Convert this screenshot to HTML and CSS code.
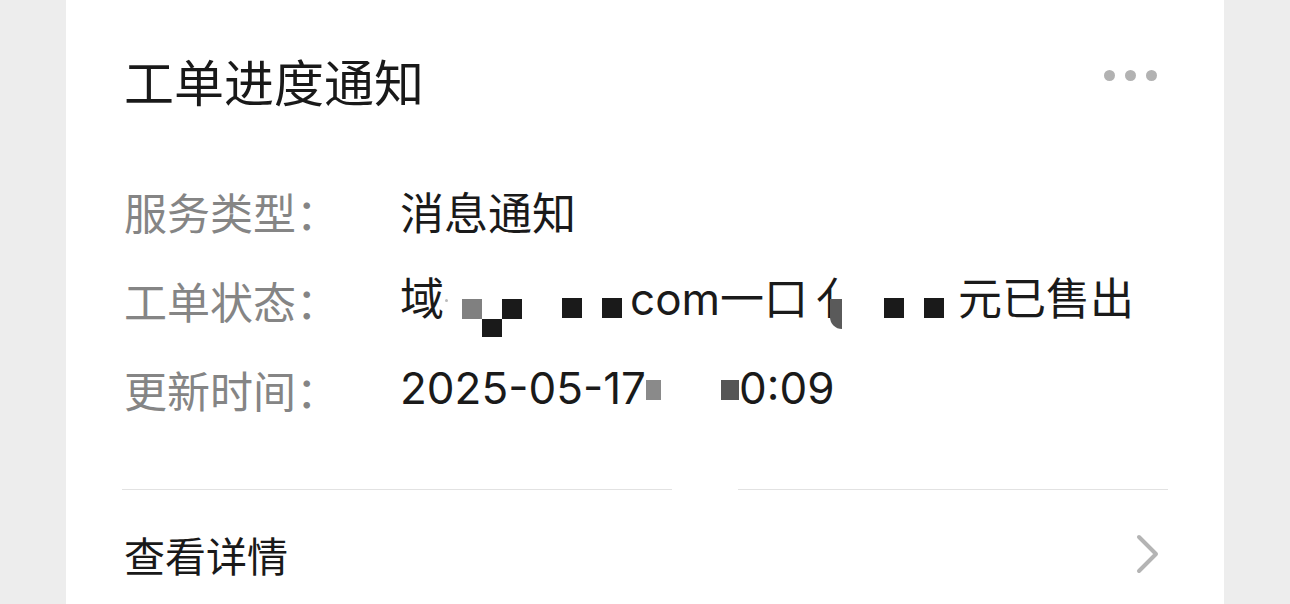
FILE: index.html
```html
<!DOCTYPE html>
<html lang="zh-CN">
<head>
<meta charset="utf-8">
<title>工单进度通知</title>
<link rel="stylesheet" href="styles.css">
</head>
<body>
<div class="card">
  <div class="header">
    <h1 class="title">工单进度通知</h1>
    <div class="more"><span class="dot"></span><span class="dot"></span><span class="dot"></span></div>
  </div>
  <div class="rows">
    <div class="row">
      <div class="label">服务类型：</div>
      <div class="value">消息通知</div>
    </div>
    <div class="row">
      <div class="label">工单状态：</div>
      <div class="value">
        <span class="txt">域</span><span class="mid-dot"></span>
        <span class="mosaic m1"><i class="g"></i><i></i><i class="b"></i><i></i><i class="b"></i><i></i></span>
        <span class="sq b s2"></span><span class="sq b s3"></span>
        <span class="txt com">com一口</span><span class="txt part">亻</span><span class="wedge"></span>
        <span class="sq b s4"></span><span class="sq b s5"></span>
        <span class="txt tail">元已售出</span>
      </div>
    </div>
    <div class="row">
      <div class="label">更新时间：</div>
      <div class="value">
        <span class="txt">2025-05-17</span><span class="sq g t1"></span><span class="sq dg t2"></span><span class="txt">0:09</span>
      </div>
    </div>
  </div>
  <div class="divider"></div>
  <div class="footer">
    <span class="link">查看详情</span>
    <svg class="chev" width="24" height="40" viewBox="0 0 24 40"><polyline points="3,3 20,20 3,37" fill="none" stroke="#b4b4b4" stroke-width="4" stroke-linecap="round" stroke-linejoin="round"/></svg>
  </div>
</div>
</body>
</html>
```

FILE: styles.css
```css
html, body {
  margin: 0;
  padding: 0;
  height: 604px;
  overflow: hidden;
  background: #ededed;
}
body {
  font-family: Inter, "Noto Sans CJK SC", sans-serif;
  color: #1a1a1a;
}
.card {
  margin-left: 66px;
  width: 1158px;
  height: 604px;
  background: #fff;
  padding: 50px 56px 0 58px;
  box-sizing: border-box;
  overflow: hidden;
}
.header {
  display: flex;
  align-items: center;
  justify-content: space-between;
  height: 60px;
}
.title {
  margin: 0;
  font-family: "Noto Sans CJK SC", sans-serif;
  font-weight: 400;
  font-size: 50px;
  line-height: 60px;
  color: #191919;
}
.more {
  display: flex;
  gap: 10px;
  margin-right: 11px;
  margin-top: -10px;
}
.dot {
  width: 11px;
  height: 11px;
  border-radius: 50%;
  background: #b2b2b2;
}
.rows {
  margin-top: 56px;
}
.row {
  display: flex;
  align-items: center;
  height: 89px;
  font-size: 44px;
}
.label {
  width: 276px;
  flex: none;
  color: #858585;
  font-family: "Noto Sans CJK SC", sans-serif;
  font-size: 43px;
}
.value {
  display: flex;
  align-items: center;
  height: 89px;
  white-space: nowrap;
}
.txt { line-height: 89px; }
.mid-dot {
  display: block;
  width: 3px;
  height: 3px;
  border-radius: 50%;
  background: #bbb;
  margin-left: 1px;
  margin-top: 2px;
}
.mosaic {
  display: grid;
  grid-template-columns: 20px 20px 20px;
  grid-template-rows: 20px 18px;
  margin-left: 14px;
  margin-top: 36px;
}
.mosaic i { display: block; }
.mosaic .g { background: #808080; }
.mosaic .b { background: #1a1a1a; }
.mosaic.m1 i:nth-child(2) { background: transparent; }
.mosaic.m1 i:nth-child(3) { background: #1a1a1a; }
.mosaic.m1 i:nth-child(4) { background: transparent; }
.mosaic.m1 i:nth-child(5) { background: #1a1a1a; }
.mosaic.m1 i:nth-child(6) { background: transparent; }
.sq {
  display: block;
  width: 20px;
  height: 20px;
  margin-top: 16px;
}
.sq.b { background: #1a1a1a; }
.sq.g { background: #8a8a8a; }
.sq.dg { background: #555; }
.s2 { margin-left: 40px; }
.s3 { margin-left: 20px; }
.com { margin-left: 8px; }
.part {
  display: block;
  width: 26px;
  margin-left: 8px;
}
.wedge {
  display: block;
  width: 12px;
  height: 30px;
  margin-top: 28px;
  margin-left: -12px;
  background: #5a5a5a;
  border-radius: 0 0 0 14px;
}
.s4 { margin-left: 42px; }
.s5 { margin-left: 20px; }
.tail { margin-left: 14px; }
.t1 { width: 15px; margin-left: 0; margin-top: 2px; }
.t2 { width: 18px; margin-left: 60px; margin-top: 2px; }
.divider {
  margin-top: 56px;
  margin-left: -2px;
  height: 1px;
  background: linear-gradient(to right, #e2e2e2 0, #e2e2e2 550px, #fff 550px, #fff 616px, #e2e2e2 616px);
}
.footer {
  display: flex;
  align-items: center;
  justify-content: space-between;
  height: 128px;
}
.link {
  font-family: "Noto Sans CJK SC", sans-serif;
  font-size: 41px;
  color: #191919;
}
.chev {
  margin-right: 8px;
}
```
